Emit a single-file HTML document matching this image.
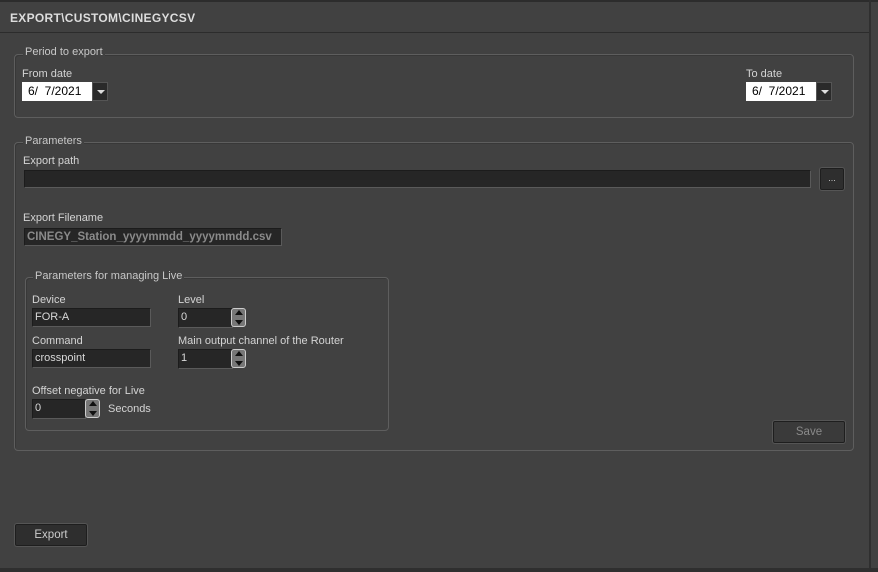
<!DOCTYPE html>
<html><head><style>
*{margin:0;padding:0;box-sizing:border-box}
body{width:878px;height:572px;background:#414141;position:relative;overflow:hidden;font-family:"Liberation Sans",sans-serif;font-size:11px;color:#d4d4d4}
.a{position:absolute}
.grp{position:absolute;border:1px solid #5e5e5e;border-radius:4px;box-shadow:inset 1px 1px 0 #383838}
.lg{position:absolute;background:#414141;padding:0 2px;color:#c8c8c8;line-height:12px}
.lbl{position:absolute;color:#d4d4d4;line-height:12px}
.inp{position:absolute;background:#262626;border:1px solid #5a5a5a;border-top-color:#1c1c1c;border-left-color:#1c1c1c;color:#d8d8d8;padding-left:2px;line-height:16px}
.date{position:absolute;background:#fff;color:#000;font-size:12px;line-height:18px;padding-left:6px}
.dd{position:absolute;background:#2a2a2a;border:1px solid #555;width:16px}
.dd:after{content:"";position:absolute;left:4px;top:7px;border-left:4px solid transparent;border-right:4px solid transparent;border-top:4px solid #ddd}
.btn{position:absolute;background:#2e2e2e;border:1px solid #1e1e1e;box-shadow:0 0 0 1px #555;border-radius:2px;text-align:center;color:#ccc}
.sp{position:absolute;width:15px;background:#777;border:1px solid #ccc;border-radius:3px}
.sp:before{content:"";position:absolute;left:3px;top:1px;border-left:4px solid transparent;border-right:4px solid transparent;border-bottom:5px solid #111}
.sp:after{content:"";position:absolute;left:3px;bottom:1px;border-left:4px solid transparent;border-right:4px solid transparent;border-top:5px solid #111}
</style></head><body>
<div class="a" style="left:0;top:0;width:878px;height:2px;background:#2c2c2c"></div>
<div class="a" style="left:10px;top:11px;font-weight:bold;font-size:12px;color:#ddd;letter-spacing:0.3px">EXPORT\CUSTOM\CINEGYCSV</div>
<div class="a" style="left:0;top:32px;width:870px;height:1px;background:#2c2c2c"></div>
<div class="a" style="left:869px;top:0;width:2px;height:572px;background:#2f2f2f"></div>
<div class="a" style="left:0;top:568px;width:878px;height:4px;background:#2f2f2f"></div>

<div class="grp" style="left:14px;top:54px;width:840px;height:64px"></div>
<div class="lg" style="left:23px;top:46px">Period to export</div>
<div class="lbl" style="left:22px;top:68px">From date</div>
<div class="date" style="left:22px;top:82px;width:70px;height:19px">6/&nbsp; 7/2021</div>
<div class="dd" style="left:92px;top:82px;height:19px"></div>
<div class="lbl" style="left:746px;top:68px">To date</div>
<div class="date" style="left:746px;top:82px;width:70px;height:19px">6/&nbsp; 7/2021</div>
<div class="dd" style="left:816px;top:82px;height:19px"></div>

<div class="grp" style="left:14px;top:142px;width:840px;height:309px"></div>
<div class="lg" style="left:23px;top:135px">Parameters</div>
<div class="lbl" style="left:23px;top:155px">Export path</div>
<div class="inp" style="left:24px;top:170px;width:787px;height:18px"></div>
<div class="btn" style="left:820px;top:168px;width:24px;height:22px;line-height:18px;font-size:9px">...</div>
<div class="lbl" style="left:23px;top:212px">Export Filename</div>
<div class="inp" style="left:24px;top:228px;width:258px;height:18px;color:#8a8a8a;font-weight:bold;font-size:11.5px">CINEGY_Station_yyyymmdd_yyyymmdd.csv</div>

<div class="grp" style="left:25px;top:277px;width:364px;height:154px"></div>
<div class="lg" style="left:33px;top:270px">Parameters for managing Live</div>
<div class="lbl" style="left:32px;top:294px">Device</div>
<div class="inp" style="left:32px;top:308px;width:119px;height:19px">FOR-A</div>
<div class="lbl" style="left:178px;top:294px">Level</div>
<div class="inp" style="left:178px;top:308px;width:55px;height:20px">0</div>
<div class="sp" style="left:231px;top:308px;height:19px"></div>
<div class="lbl" style="left:32px;top:335px">Command</div>
<div class="inp" style="left:32px;top:349px;width:119px;height:19px">crosspoint</div>
<div class="lbl" style="left:178px;top:335px">Main output channel of the Router</div>
<div class="inp" style="left:178px;top:349px;width:55px;height:20px">1</div>
<div class="sp" style="left:231px;top:349px;height:19px"></div>
<div class="lbl" style="left:32px;top:385px">Offset negative for Live</div>
<div class="inp" style="left:32px;top:399px;width:54px;height:20px">0</div>
<div class="sp" style="left:85px;top:399px;height:19px"></div>
<div class="lbl" style="left:108px;top:403px">Seconds</div>

<div class="btn" style="left:773px;top:421px;width:72px;height:22px;line-height:20px;background:#3a3a3a;color:#8a8a8a;font-size:11.5px">Save</div>
<div class="btn" style="left:15px;top:524px;width:72px;height:22px;line-height:20px;font-size:11.5px">Export</div>
</body></html>
